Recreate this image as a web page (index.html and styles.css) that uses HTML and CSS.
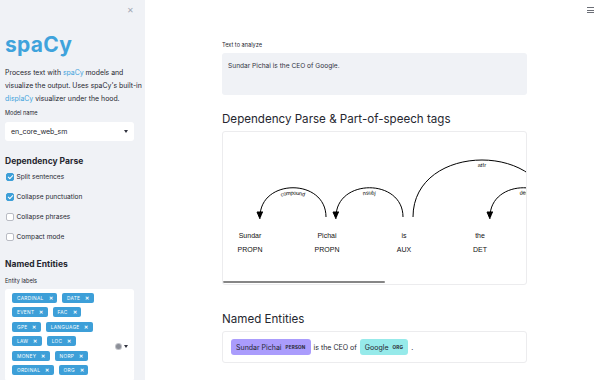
FILE: index.html
```html
<!DOCTYPE html>
<html lang="en">
<head>
  <meta charset="UTF-8">
  <title>spaCy Streamlit</title>
  <link rel="stylesheet" href="styles.css">
</head>
<body>
  <aside class="sidebar">
    <div class="close">&#x2715;</div>
    <h1 class="brand">spaCy</h1>
    <p class="intro">Process text with <a href="#">spaCy</a> models and<br>visualize the output. Uses spaCy's built-in<br><a href="#">displaCy</a> visualizer under the hood.</p>

    <div class="field-label">Model name</div>
    <div class="select">
      <span>en_core_web_sm</span>
      <span class="caret"></span>
    </div>

    <h2 class="side-heading">Dependency Parse</h2>
    <label class="check"><span class="box on"></span>Split sentences</label>
    <label class="check"><span class="box on"></span>Collapse punctuation</label>
    <label class="check"><span class="box"></span>Collapse phrases</label>
    <label class="check"><span class="box"></span>Compact mode</label>

    <h2 class="side-heading ents-heading">Named Entities</h2>
    <div class="field-label">Entity labels</div>
    <div class="multi">
      <div class="tags">
        <span class="tag">CARDINAL<i>&#x2715;</i></span>
        <span class="tag">DATE<i>&#x2715;</i></span>
        <span class="tag">EVENT<i>&#x2715;</i></span>
        <span class="tag">FAC<i>&#x2715;</i></span>
        <span class="tag">GPE<i>&#x2715;</i></span>
        <span class="tag">LANGUAGE<i>&#x2715;</i></span>
        <span class="tag">LAW<i>&#x2715;</i></span>
        <span class="tag">LOC<i>&#x2715;</i></span>
        <span class="tag">MONEY<i>&#x2715;</i></span>
        <span class="tag">NORP<i>&#x2715;</i></span>
        <span class="tag">ORDINAL<i>&#x2715;</i></span>
        <span class="tag">ORG<i>&#x2715;</i></span>
      </div>
      <div class="multi-tools">
        <span class="gear"></span>
        <span class="caret"></span>
      </div>
    </div>
  </aside>

  <main class="main">
    <div class="menu"><span></span><span></span><span></span></div>
    <div class="content">
      <div class="field-label">Text to analyze</div>
      <div class="textarea">Sundar Pichai is the CEO of Google.</div>

      <h3 class="section-title">Dependency Parse &amp; Part-of-speech tags</h3>
      <div class="dep-box">
        <svg class="displacy" width="305" height="150" viewBox="0 0 305 150">
          <defs>
            <path id="arc-compound" d="M38,85 C38,46 104,46 104,85"/>
            <path id="arc-nsubj" d="M114,85 C114,46 181,46 181,85"/>
            <path id="arc-attr" d="M191,85 C191,9 329,9 329,85"/>
            <path id="arc-det" d="M268,85 C268,46 335,46 335,85"/>
          </defs>
          <g class="word">
            <text x="28" y="106">Sundar</text>
            <text x="28" y="120">PROPN</text>
          </g>
          <g class="word">
            <text x="105" y="106">Pichai</text>
            <text x="105" y="120">PROPN</text>
          </g>
          <g class="word">
            <text x="182" y="106">is</text>
            <text x="182" y="120">AUX</text>
          </g>
          <g class="word">
            <text x="258" y="106">the</text>
            <text x="258" y="120">DET</text>
          </g>

          <use href="#arc-compound" class="arc"/>
          <text class="arc-label" dy="1.25em"><textPath href="#arc-compound" startOffset="50%" text-anchor="middle">compound</textPath></text>
          <path class="arrow" d="M38,87 L35,80 41,80"/>

          <use href="#arc-nsubj" class="arc"/>
          <text class="arc-label" dy="1.25em"><textPath href="#arc-nsubj" startOffset="50%" text-anchor="middle">nsubj</textPath></text>
          <path class="arrow" d="M114,87 L111,80 117,80"/>

          <use href="#arc-attr" class="arc"/>
          <text class="arc-label" dy="1.25em"><textPath href="#arc-attr" startOffset="50%" text-anchor="middle">attr</textPath></text>

          <use href="#arc-det" class="arc"/>
          <text class="arc-label" dy="1.25em"><textPath href="#arc-det" startOffset="50%" text-anchor="middle">det</textPath></text>
          <path class="arrow" d="M268,87 L265,80 271,80"/>
        </svg>
        <div class="scroll"><div class="thumb"></div></div>
      </div>

      <h3 class="section-title ents-title">Named Entities</h3>
      <div class="ent-box">
        <mark class="ent person">Sundar Pichai <span class="ent-label">PERSON</span></mark>
        is the CEO of
        <mark class="ent org">Google <span class="ent-label">ORG</span></mark>
        .
      </div>
    </div>
  </main>
</body>
</html>
```

FILE: styles.css
```css
body {
  margin: 0;
  font-family: Inter, "Noto Sans", sans-serif;
  color: #262730;
  display: flex;
  height: 380px;
  overflow: hidden;
}
a {
  color: #3fa3dc;
  text-decoration: none;
}
.sidebar {
  width: 145px;
  flex: none;
  box-sizing: border-box;
  padding: 0 0 0 5px;
  background: #f0f2f6;
  position: relative;
  overflow: hidden;
}
.close {
  position: absolute;
  top: 5px;
  right: 11px;
  font-size: 8px;
  color: #a3a8b4;
}
.brand {
  margin: 31px 0 0;
  font-size: 21px;
  font-weight: 700;
  line-height: 28px;
  color: #3fa3dc;
  letter-spacing: 0.3px;
}
.intro {
  margin: 7px 0 0;
  font-size: 6.9px;
  line-height: 13px;
  white-space: nowrap;
}
.field-label {
  font-size: 5.6px;
  line-height: 8px;
  margin-top: 4px;
}
.select {
  width: 129px;
  height: 19px;
  box-sizing: border-box;
  margin-top: 4.5px;
  padding: 0 6px;
  background: #fff;
  border-radius: 3px;
  display: flex;
  align-items: center;
  justify-content: space-between;
  font-size: 7px;
}
.caret {
  width: 0;
  height: 0;
  border-left: 2.5px solid transparent;
  border-right: 2.5px solid transparent;
  border-top: 3px solid #31333f;
}
.side-heading {
  margin: 14px 0 0;
  font-size: 8.5px;
  font-weight: 700;
  line-height: 12px;
}
.check {
  display: flex;
  align-items: center;
  gap: 2.5px;
  height: 20px;
  font-size: 6.6px;
  padding-left: 1px;
}
.box {
  width: 8px;
  height: 8px;
  box-sizing: border-box;
  border: 1px solid #b9bcc4;
  border-radius: 2px;
  background: #fff;
  position: relative;
}
.box.on {
  background: #3d9fd8;
  border-color: #3d9fd8;
}
.box.on::after {
  content: "";
  position: absolute;
  left: 2px;
  top: 0.5px;
  width: 2px;
  height: 4px;
  border: solid #fff;
  border-width: 0 1px 1px 0;
  transform: rotate(45deg);
}
.ents-heading {
  margin-top: 11px;
}
.ents-heading + .field-label {
  margin-top: 7px;
}
.multi {
  width: 129px;
  box-sizing: border-box;
  margin-top: 4px;
  padding: 4px 6px 6px 7px;
  background: #fff;
  border-radius: 3px;
  display: flex;
  align-items: center;
}
.tags {
  width: 96px;
  display: flex;
  flex-wrap: wrap;
  gap: 4.5px 5px;
}
.tag {
  display: inline-flex;
  align-items: center;
  height: 10px;
  padding: 0 4px 0 5px;
  gap: 5px;
  background: #3d9fd8;
  color: #fff;
  border-radius: 2px;
  font-size: 4.8px;
  letter-spacing: 0.3px;
}
.tag i {
  font-style: normal;
  font-size: 5px;
  font-weight: 700;
}
.multi-tools {
  margin-left: auto;
  display: flex;
  align-items: center;
  gap: 3px;
  padding-top: 26px;
}
.gear {
  width: 5px;
  height: 5px;
  border-radius: 50%;
  background: #8c8f98;
  box-shadow: 0 0 0 1px #c0c2c8;
}
.main {
  flex: 1;
  position: relative;
  background: #fff;
}
.menu {
  position: absolute;
  top: 7px;
  right: 6px;
  display: flex;
  flex-direction: column;
  gap: 1.5px;
}
.menu span {
  width: 7px;
  height: 1px;
  background: #6b6e76;
}
.content {
  width: 305px;
  margin-left: 77px;
  padding-top: 41px;
}
.content .field-label {
  margin: 0;
}
.textarea {
  margin-top: 4px;
  height: 42px;
  box-sizing: border-box;
  padding: 8px 6px;
  background: #f0f2f6;
  border-radius: 3px;
  font-size: 6.6px;
  line-height: 10px;
  color: #31333f;
}
.section-title {
  margin: 15px 0 3px;
  font-size: 11.6px;
  font-weight: 400;
  line-height: 18px;
}
.ents-title {
  margin-top: 25px;
}
.dep-box {
  height: 154px;
  box-sizing: border-box;
  border: 1px solid #ececee;
  border-radius: 3px;
  overflow: hidden;
  position: relative;
}
.displacy {
  display: block;
  margin: 0 0 0 -1px;
  font-family: "Liberation Sans", Arial, sans-serif;
}
.word text {
  font-size: 7px;
  fill: #111;
  text-anchor: middle;
}
.arc {
  fill: none;
  stroke: #000;
  stroke-width: 1px;
}
.arrow {
  fill: #000;
  stroke: #000;
  stroke-width: 1px;
}
.arc-label {
  font-size: 5.5px;
  letter-spacing: 0.3px;
  fill: #000;
}
.scroll {
  position: absolute;
  left: 0;
  right: 0;
  bottom: 1px;
  height: 2px;
}
.thumb {
  width: 162px;
  height: 2px;
  background: #868686;
  border-radius: 1px;
}
.ent-box {
  height: 32px;
  box-sizing: border-box;
  border: 1px solid #ececee;
  border-radius: 3px;
  padding: 0 8px;
  display: flex;
  align-items: center;
  gap: 3px;
  font-size: 7px;
}
.ent {
  display: inline-flex;
  align-items: center;
  height: 16px;
  padding: 0 5px;
  border-radius: 3px;
  color: #262730;
  gap: 4px;
}
.person {
  background: #aa9cfc;
}
.org {
  background: #96eaea;
}
.ent-label {
  font-size: 4.6px;
  font-weight: 700;
  text-transform: uppercase;
  letter-spacing: 0.2px;
}
```
